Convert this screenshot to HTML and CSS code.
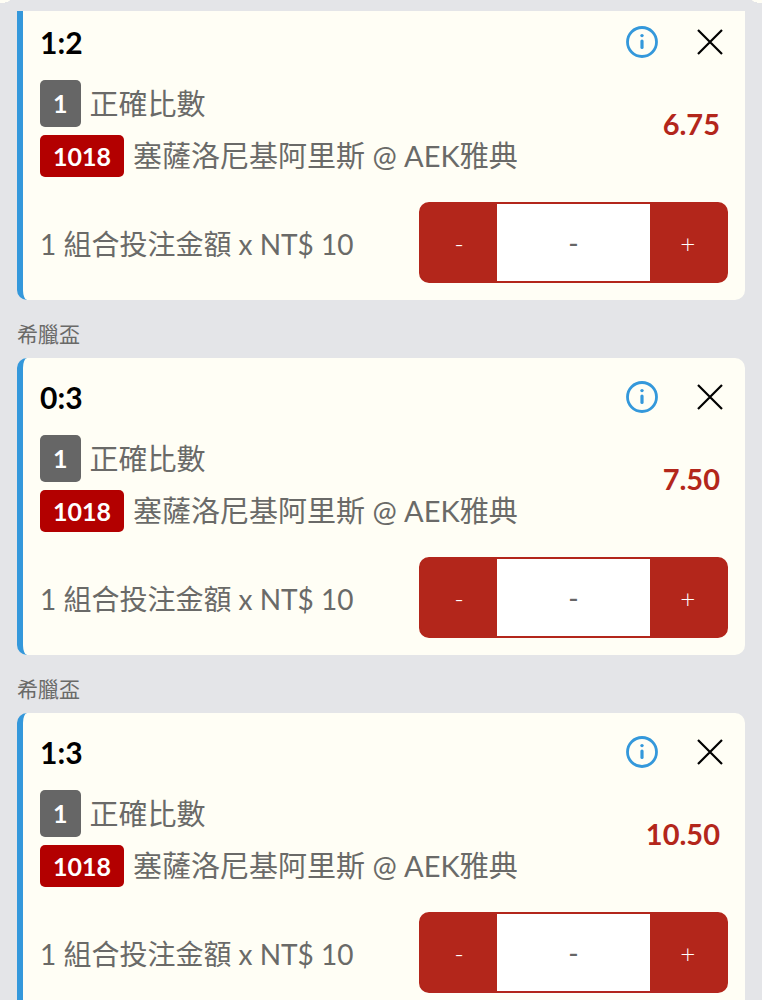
FILE: index.html
```
<!DOCTYPE html>
<html lang="zh-Hant">
<head>
  <meta charset="UTF-8">
  <meta name="viewport" content="width=device-width, initial-scale=1">
  <title>投注單</title>
  <link rel="stylesheet" href="styles.css">
</head>
<body>
  <header class="topbar"></header>

  <main class="slip">
    <section class="bet">
      <div class="card card-cut">
        <div class="card-head">
          <h2 class="score">1:2</h2>
          <button class="icon-btn" type="button" aria-label="資訊">
            <svg width="34" height="34" viewBox="0 0 34 34" fill="none" stroke="#3498db" stroke-linecap="round">
              <circle cx="17" cy="17" r="14.5" stroke-width="2.8"/>
              <path d="M17 16v6.5" stroke-width="3.2"/>
              <circle cx="17" cy="10.6" r="1.7" fill="#3498db" stroke="none"/>
            </svg>
          </button>
          <button class="icon-btn" type="button" aria-label="刪除">
            <svg width="34" height="34" viewBox="0 0 34 34" fill="none" stroke="#000">
              <path d="M5 5l24 24M29 5L5 29" stroke-width="2.2"/>
            </svg>
          </button>
        </div>
        <div class="card-info">
          <div class="lines">
            <p class="line"><span class="tag tag-gray">1</span><span class="name">正確比數</span></p>
            <p class="line"><span class="tag tag-red">1018</span><span class="name">塞薩洛尼基阿里斯 @ AEK雅典</span></p>
          </div>
          <strong class="odds">6.75</strong>
        </div>
        <div class="card-stake">
          <label class="stake-label" for="stake1">1 組合投注金額 x NT$ 10</label>
          <div class="stepper">
            <button class="step" type="button">-</button>
            <input class="amount" id="stake1" type="text" value="-">
            <button class="step" type="button">+</button>
          </div>
        </div>
      </div>
    </section>

    <section class="bet">
      <h3 class="league">希臘盃</h3>
      <div class="card">
        <div class="card-head">
          <h2 class="score">0:3</h2>
          <button class="icon-btn" type="button" aria-label="資訊">
            <svg width="34" height="34" viewBox="0 0 34 34" fill="none" stroke="#3498db" stroke-linecap="round">
              <circle cx="17" cy="17" r="14.5" stroke-width="2.8"/>
              <path d="M17 16v6.5" stroke-width="3.2"/>
              <circle cx="17" cy="10.6" r="1.7" fill="#3498db" stroke="none"/>
            </svg>
          </button>
          <button class="icon-btn" type="button" aria-label="刪除">
            <svg width="34" height="34" viewBox="0 0 34 34" fill="none" stroke="#000">
              <path d="M5 5l24 24M29 5L5 29" stroke-width="2.2"/>
            </svg>
          </button>
        </div>
        <div class="card-info">
          <div class="lines">
            <p class="line"><span class="tag tag-gray">1</span><span class="name">正確比數</span></p>
            <p class="line"><span class="tag tag-red">1018</span><span class="name">塞薩洛尼基阿里斯 @ AEK雅典</span></p>
          </div>
          <strong class="odds">7.50</strong>
        </div>
        <div class="card-stake">
          <label class="stake-label" for="stake2">1 組合投注金額 x NT$ 10</label>
          <div class="stepper">
            <button class="step" type="button">-</button>
            <input class="amount" id="stake2" type="text" value="-">
            <button class="step" type="button">+</button>
          </div>
        </div>
      </div>
    </section>

    <section class="bet">
      <h3 class="league">希臘盃</h3>
      <div class="card">
        <div class="card-head">
          <h2 class="score">1:3</h2>
          <button class="icon-btn" type="button" aria-label="資訊">
            <svg width="34" height="34" viewBox="0 0 34 34" fill="none" stroke="#3498db" stroke-linecap="round">
              <circle cx="17" cy="17" r="14.5" stroke-width="2.8"/>
              <path d="M17 16v6.5" stroke-width="3.2"/>
              <circle cx="17" cy="10.6" r="1.7" fill="#3498db" stroke="none"/>
            </svg>
          </button>
          <button class="icon-btn" type="button" aria-label="刪除">
            <svg width="34" height="34" viewBox="0 0 34 34" fill="none" stroke="#000">
              <path d="M5 5l24 24M29 5L5 29" stroke-width="2.2"/>
            </svg>
          </button>
        </div>
        <div class="card-info">
          <div class="lines">
            <p class="line"><span class="tag tag-gray">1</span><span class="name">正確比數</span></p>
            <p class="line"><span class="tag tag-red">1018</span><span class="name">塞薩洛尼基阿里斯 @ AEK雅典</span></p>
          </div>
          <strong class="odds">10.50</strong>
        </div>
        <div class="card-stake">
          <label class="stake-label" for="stake3">1 組合投注金額 x NT$ 10</label>
          <div class="stepper">
            <button class="step" type="button">-</button>
            <input class="amount" id="stake3" type="text" value="-">
            <button class="step" type="button">+</button>
          </div>
        </div>
      </div>
    </section>
  </main>
</body>
</html>
```
FILE: styles.css
```
* {
  box-sizing: border-box;
}

body {
  margin: 0;
  font-family: Lato, "Noto Sans CJK TC", sans-serif;
  font-size: 28px;
  color: #6a6a68;
  background: #e4e5e8;
}

h2, h3, p {
  margin: 0;
}

button, input {
  font-family: inherit;
  margin: 0;
  padding: 0;
  border: none;
}

.topbar {
  height: 11px;
  background:
    radial-gradient(10px 3px at 0 0, #fffef5 95%, transparent) no-repeat,
    radial-gradient(10px 3px at 100% 0, #fffef5 95%, transparent) no-repeat;
}

.slip {
  padding: 0 17px;
}

.league {
  height: 58px;
  padding-top: 10px;
  font-size: 21px;
  font-weight: normal;
  line-height: 48px;
}

.card {
  padding: 18px 17px 17px;
  border-left: 6px solid #3498db;
  border-radius: 10px;
  background: #fffef5;
}

/* scrolled under the top bar */
.card-cut {
  padding-top: 10px;
  border-top-left-radius: 0;
  border-top-right-radius: 0;
}

.card-head {
  display: flex;
  align-items: center;
  gap: 34px;
  height: 42px;
  padding-right: 1px;
}

.score {
  flex: 1;
  font-size: 30px;
  line-height: 34px;
  color: #000;
}

.icon-btn {
  display: flex;
  background: none;
  cursor: pointer;
}

.card-info {
  display: flex;
  align-items: center;
  justify-content: space-between;
  padding: 17px 8px 0 0;
}

.line {
  display: flex;
  align-items: center;
  gap: 9px;
}

.line + .line {
  margin-top: 8px;
}

.tag {
  padding: 0 13px;
  border-radius: 5px;
  font-size: 25px;
  font-weight: bold;
  color: #fff;
}

.tag-gray {
  line-height: 47px;
  background: #666;
}

.tag-red {
  line-height: 42px;
  background: #b30000;
}

.name {
  font-size: 29px;
  line-height: 42px;
}

.odds {
  padding-bottom: 10px;
  font-size: 29px;
  color: #b3261b;
}

.card-stake {
  display: flex;
  align-items: center;
  justify-content: space-between;
  margin-top: 25px;
}

.stepper {
  display: flex;
  width: 309px;
  height: 81px;
  border: 2px solid #b3261b;
  border-radius: 10px;
  background: #b3261b;
  overflow: hidden;
}

.step {
  flex: 1;
  min-width: 0;
  font-size: 26px;
  font-weight: 300;
  color: #fff;
  background: #b3261b;
  cursor: pointer;
}

.amount {
  flex: 2;
  min-width: 0;
  font-size: 28px;
  color: #666;
  text-align: center;
  background: #fff;
}
```
